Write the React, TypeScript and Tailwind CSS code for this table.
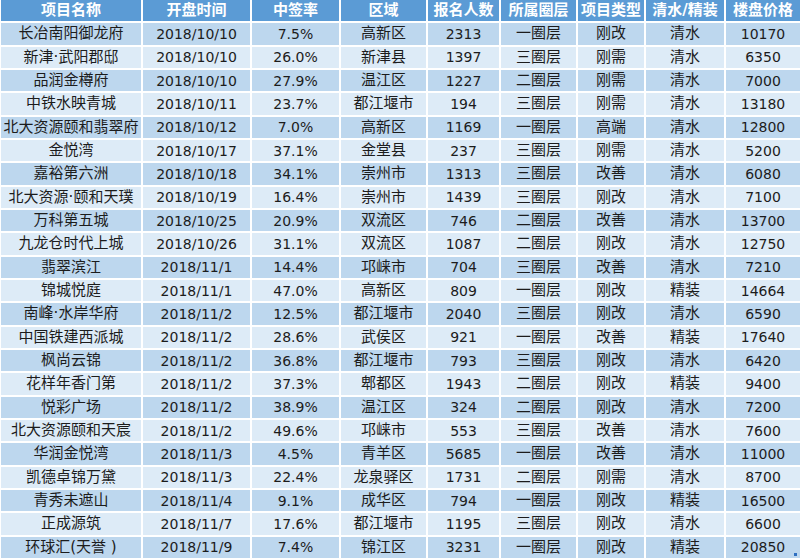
const headers = ['项目名称', '开盘时间', '中签率', '区域', '报名人数', '所属圈层', '项目类型', '清水/精装', '楼盘价格'];

const rows: string[][] = [
  ['长冶南阳御龙府', '2018/10/10', '7.5%', '高新区', '2313', '一圈层', '刚改', '清水', '10170'],
  ['新津·武阳郡邸', '2018/10/10', '26.0%', '新津县', '1397', '三圈层', '刚需', '清水', '6350'],
  ['品润金樽府', '2018/10/10', '27.9%', '温江区', '1227', '二圈层', '刚需', '清水', '7000'],
  ['中铁水映青城', '2018/10/11', '23.7%', '都江堰市', '194', '三圈层', '刚需', '清水', '13180'],
  ['北大资源颐和翡翠府', '2018/10/12', '7.0%', '高新区', '1169', '一圈层', '高端', '清水', '12800'],
  ['金悦湾', '2018/10/17', '37.1%', '金堂县', '237', '三圈层', '刚需', '清水', '5200'],
  ['嘉裕第六洲', '2018/10/18', '34.1%', '崇州市', '1313', '三圈层', '改善', '清水', '6080'],
  ['北大资源·颐和天璞', '2018/10/19', '16.4%', '崇州市', '1439', '三圈层', '刚改', '清水', '7100'],
  ['万科第五城', '2018/10/25', '20.9%', '双流区', '746', '二圈层', '改善', '清水', '13700'],
  ['九龙仓时代上城', '2018/10/26', '31.1%', '双流区', '1087', '二圈层', '刚改', '清水', '12750'],
  ['翡翠滨江', '2018/11/1', '14.4%', '邛崃市', '704', '三圈层', '改善', '清水', '7210'],
  ['锦城悦庭', '2018/11/1', '47.0%', '高新区', '809', '一圈层', '刚改', '精装', '14664'],
  ['南峰·水岸华府', '2018/11/2', '12.5%', '都江堰市', '2040', '三圈层', '刚改', '清水', '6590'],
  ['中国铁建西派城', '2018/11/2', '28.6%', '武侯区', '921', '一圈层', '改善', '精装', '17640'],
  ['枫尚云锦', '2018/11/2', '36.8%', '都江堰市', '793', '三圈层', '刚改', '清水', '6420'],
  ['花样年香门第', '2018/11/2', '37.3%', '郫都区', '1943', '二圈层', '刚改', '精装', '9400'],
  ['悦彩广场', '2018/11/2', '38.9%', '温江区', '324', '二圈层', '刚改', '清水', '7200'],
  ['北大资源颐和天宸', '2018/11/2', '49.6%', '邛崃市', '553', '三圈层', '改善', '清水', '7600'],
  ['华润金悦湾', '2018/11/3', '4.5%', '青羊区', '5685', '一圈层', '改善', '清水', '11000'],
  ['凯德卓锦万黛', '2018/11/3', '22.4%', '龙泉驿区', '1731', '二圈层', '刚需', '清水', '8700'],
  ['青秀未遮山', '2018/11/4', '9.1%', '成华区', '794', '一圈层', '刚改', '精装', '16500'],
  ['正成源筑', '2018/11/7', '17.6%', '都江堰市', '1195', '三圈层', '刚改', '清水', '6600'],
  ['环球汇(天誉 )', '2018/11/9', '7.4%', '锦江区', '3231', '一圈层', '刚改', '精装', '20850'],
];

// numeric columns use a narrower latin face, chinese ones a bit larger
const colText = [
  'text-[15px]',
  'text-[14px]',
  'text-[14px]',
  'text-[15px]',
  'text-[14px]',
  'text-[15px]',
  'text-[15px]',
  'text-[15px]',
  'text-[14px]',
];

export default function App() {
  return (
    <div
      className="relative w-[800px] h-[558px] bg-white pl-px grid grid-cols-[140px_107px_87px_85px_71px_75px_66px_78px_74px] auto-rows-fr gap-[2px] text-[#1c1c1c]"
      style={{ fontFamily: '"DejaVu Sans", "Noto Sans CJK SC", sans-serif' }}
    >
      {/* Header */}
      {headers.map((h) => (
        <div
          key={h}
          className="bg-[#5b9bd5] text-white font-bold text-[15px] flex items-center justify-center whitespace-nowrap overflow-hidden"
        >
          {h}
        </div>
      ))}

      {/* Body */}
      {rows.map((row, i) =>
        row.map((cell, j) => (
          <div
            key={`${i}-${j}`}
            className={`${i % 2 === 0 ? 'bg-[#bdd7ee]' : 'bg-[#ddebf7]'} ${colText[j]} flex items-center justify-center whitespace-nowrap overflow-hidden leading-none`}
          >
            {cell}
          </div>
        ))
      )}

      {/* resize handle */}
      <div className="absolute right-[3px] bottom-[2px] w-[3px] h-[3px] bg-[#2f6fc0]" />
    </div>
  );
}
